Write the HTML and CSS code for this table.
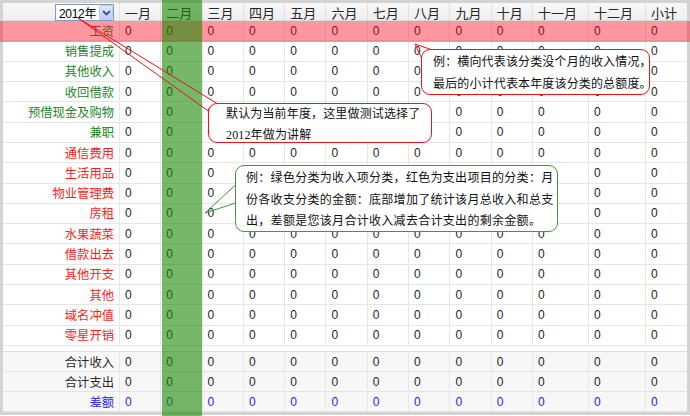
FILE: index.html
```html
<!DOCTYPE html>
<html lang="zh-CN">
<head>
<meta charset="utf-8">
<title>年度收支</title>
<link rel="stylesheet" href="styles.css">
</head>
<body>
<div class="frame">
  <div class="row head">
    <div class="lab"><div class="yearsel"><span class="yeartext">2012年</span><span class="selbtn"><svg width="9" height="6" viewBox="0 0 9 6"><path d="M1 1 L4.5 4.5 L8 1" fill="none" stroke="#3e5580" stroke-width="1.8"/></svg></span></div></div>
    <div>一月</div><div>二月</div><div>三月</div><div>四月</div><div>五月</div><div>六月</div><div>七月</div><div>八月</div><div>九月</div><div>十月</div><div>十一月</div><div>十二月</div><div>小计</div>
  </div>
  <div class="row"><div class="lab inc">工资</div><div>0</div><div>0</div><div>0</div><div>0</div><div>0</div><div>0</div><div>0</div><div>0</div><div>0</div><div>0</div><div>0</div><div>0</div><div>0</div></div>
  <div class="row"><div class="lab inc">销售提成</div><div>0</div><div>0</div><div>0</div><div>0</div><div>0</div><div>0</div><div>0</div><div>0</div><div>0</div><div>0</div><div>0</div><div>0</div><div>0</div></div>
  <div class="row"><div class="lab inc">其他收入</div><div>0</div><div>0</div><div>0</div><div>0</div><div>0</div><div>0</div><div>0</div><div>0</div><div>0</div><div>0</div><div>0</div><div>0</div><div>0</div></div>
  <div class="row"><div class="lab inc">收回借款</div><div>0</div><div>0</div><div>0</div><div>0</div><div>0</div><div>0</div><div>0</div><div>0</div><div>0</div><div>0</div><div>0</div><div>0</div><div>0</div></div>
  <div class="row"><div class="lab inc">预借现金及购物</div><div>0</div><div>0</div><div>0</div><div>0</div><div>0</div><div>0</div><div>0</div><div>0</div><div>0</div><div>0</div><div>0</div><div>0</div><div>0</div></div>
  <div class="row"><div class="lab inc">兼职</div><div>0</div><div>0</div><div>0</div><div>0</div><div>0</div><div>0</div><div>0</div><div>0</div><div>0</div><div>0</div><div>0</div><div>0</div><div>0</div></div>
  <div class="row"><div class="lab exp">通信费用</div><div>0</div><div>0</div><div>0</div><div>0</div><div>0</div><div>0</div><div>0</div><div>0</div><div>0</div><div>0</div><div>0</div><div>0</div><div>0</div></div>
  <div class="row"><div class="lab exp">生活用品</div><div>0</div><div>0</div><div>0</div><div>0</div><div>0</div><div>0</div><div>0</div><div>0</div><div>0</div><div>0</div><div>0</div><div>0</div><div>0</div></div>
  <div class="row"><div class="lab exp">物业管理费</div><div>0</div><div>0</div><div>0</div><div>0</div><div>0</div><div>0</div><div>0</div><div>0</div><div>0</div><div>0</div><div>0</div><div>0</div><div>0</div></div>
  <div class="row"><div class="lab exp">房租</div><div>0</div><div>0</div><div>0</div><div>0</div><div>0</div><div>0</div><div>0</div><div>0</div><div>0</div><div>0</div><div>0</div><div>0</div><div>0</div></div>
  <div class="row"><div class="lab exp">水果蔬菜</div><div>0</div><div>0</div><div>0</div><div>0</div><div>0</div><div>0</div><div>0</div><div>0</div><div>0</div><div>0</div><div>0</div><div>0</div><div>0</div></div>
  <div class="row"><div class="lab exp">借款出去</div><div>0</div><div>0</div><div>0</div><div>0</div><div>0</div><div>0</div><div>0</div><div>0</div><div>0</div><div>0</div><div>0</div><div>0</div><div>0</div></div>
  <div class="row"><div class="lab exp">其他开支</div><div>0</div><div>0</div><div>0</div><div>0</div><div>0</div><div>0</div><div>0</div><div>0</div><div>0</div><div>0</div><div>0</div><div>0</div><div>0</div></div>
  <div class="row"><div class="lab exp">其他</div><div>0</div><div>0</div><div>0</div><div>0</div><div>0</div><div>0</div><div>0</div><div>0</div><div>0</div><div>0</div><div>0</div><div>0</div><div>0</div></div>
  <div class="row"><div class="lab exp">域名冲值</div><div>0</div><div>0</div><div>0</div><div>0</div><div>0</div><div>0</div><div>0</div><div>0</div><div>0</div><div>0</div><div>0</div><div>0</div><div>0</div></div>
  <div class="row"><div class="lab exp">零星开销</div><div>0</div><div>0</div><div>0</div><div>0</div><div>0</div><div>0</div><div>0</div><div>0</div><div>0</div><div>0</div><div>0</div><div>0</div><div>0</div></div>
  <div class="sep"></div>
  <div class="row sum"><div class="lab">合计收入</div><div>0</div><div>0</div><div>0</div><div>0</div><div>0</div><div>0</div><div>0</div><div>0</div><div>0</div><div>0</div><div>0</div><div>0</div><div>0</div></div>
  <div class="row sum"><div class="lab">合计支出</div><div>0</div><div>0</div><div>0</div><div>0</div><div>0</div><div>0</div><div>0</div><div>0</div><div>0</div><div>0</div><div>0</div><div>0</div><div>0</div></div>
  <div class="row sum diff"><div class="lab">差额</div><div>0</div><div>0</div><div>0</div><div>0</div><div>0</div><div>0</div><div>0</div><div>0</div><div>0</div><div>0</div><div>0</div><div>0</div><div>0</div></div>
</div>

<div class="hl-row"></div>
<div class="hl-col"></div>

<div class="note note-year">默认为当前年度，这里做测试选择了<br>2012年做为讲解</div>
<div class="note note-row">例：横向代表该分类没个月的收入情况，<br>最后的小计代表本年度该分类的总额度。</div>
<div class="note note-color">例：绿色分类为收入项分类，红色为支出项目的分类：月<br>份各收支分类的金额：底部增加了统计该月总收入和总支<br>出，差额是您该月合计收入减去合计支出的剩余金额。</div>

<svg class="tails" width="690" height="416" viewBox="0 0 690 416">
  <polyline points="208.5,111 78,18 217,103.5" fill="none" stroke="#e8141c" stroke-width="1"/>
  <polyline points="421.5,58 415,44 431,49.5" fill="none" stroke="#e8141c" stroke-width="1"/>
  <polyline points="235.5,185 205,213 235.5,203" fill="none" stroke="#3f9a33" stroke-width="1"/>
</svg>
</body>
</html>
```

FILE: styles.css
```css
* {
  box-sizing: border-box;
  margin: 0;
  padding: 0;
}

html, body {
  width: 690px;
  height: 416px;
  overflow: hidden;
  background: #ffffff;
}

body {
  position: relative;
  font-family: "Liberation Sans", "Noto Sans CJK SC", sans-serif;
  font-size: 12px;
  color: #1e1e1e;
}

.frame {
  width: 690px;
  height: 415px;
  border: 3px solid #d3d3d3;
  background: #ffffff;
}

.row {
  display: grid;
  grid-template-columns: 117px repeat(10, 41.3px) 56px 57px 41px;
  height: 20.3125px;
  border-bottom: 1px solid #e6e6e6;
}

.row > div {
  display: flex;
  align-items: center;
  padding-left: 5px;
  border-right: 1px solid #e6e6e6;
  white-space: nowrap;
  overflow: hidden;
}

.row > div:last-child {
  border-right: 0;
}

.row > .lab {
  justify-content: flex-end;
  padding: 0 5px 0 0;
  font-size: 12.3px;
}

.head {
  height: 18px;
  background: linear-gradient(#f8f8f8, #eeeeee);
  border-bottom: 1px solid #dddddd;
  font-size: 13px;
  color: #262626;
}

.head > div {
  border-right-color: #e0e0e0;
}

.head > .lab {
  overflow: visible;
}

.inc {
  color: #23861f;
}

.exp {
  color: #fa1e1e;
}

.sep {
  height: 6px;
  border-bottom: 1px solid #dedede;
}

.sum {
  height: 20px;
  background: #f7f7f7;
  border-bottom-color: #e3e3e3;
}

.sum > .lab {
  color: #2a2a2a;
}

.diff,
.diff > .lab {
  color: #2525f0;
}

.yearsel {
  display: flex;
  align-items: center;
  width: 59px;
  height: 17px;
  margin-top: 1px;
  border: 1px solid #7f9db9;
  background: #ffffff;
}

.yeartext {
  flex: 1;
  padding-left: 3px;
  font-size: 12px;
  letter-spacing: -0.3px;
  color: #000000;
}

.selbtn {
  display: flex;
  align-items: center;
  justify-content: center;
  width: 14px;
  height: 15px;
  margin-right: 0;
  border: 1px solid #b9cbef;
  border-radius: 2px;
  background: linear-gradient(#dfe9fd, #bccdf6);
}

.hl-row {
  position: absolute;
  left: 0;
  top: 21px;
  width: 690px;
  height: 21px;
  background: rgba(255, 0, 24, 0.41);
}

.hl-col {
  position: absolute;
  left: 162px;
  top: 0;
  width: 40px;
  height: 416px;
  background: rgba(27, 137, 3, 0.6);
}

.note {
  position: absolute;
  background: #ffffff;
  border: 1px solid #e8141c;
  border-radius: 9px;
  font-family: "Liberation Serif", "Noto Sans CJK SC", serif;
  font-size: 12px;
  letter-spacing: 0.15px;
  color: #111111;
  white-space: nowrap;
}

.note-year {
  left: 208px;
  top: 103px;
  width: 224px;
  height: 40px;
  padding: 0 0 0 17px;
  line-height: 20.5px;
}

.note-row {
  left: 421px;
  top: 49px;
  width: 229px;
  height: 46px;
  padding: 2px 0 0 11px;
  line-height: 21.5px;
}

.note-color {
  left: 235px;
  top: 165px;
  width: 323px;
  height: 67px;
  padding: 2px 0 0 10px;
  border-color: #3f9a33;
  line-height: 21.5px;
  letter-spacing: 0.3px;
}

.tails {
  position: absolute;
  left: 0;
  top: 0;
  pointer-events: none;
}
```
